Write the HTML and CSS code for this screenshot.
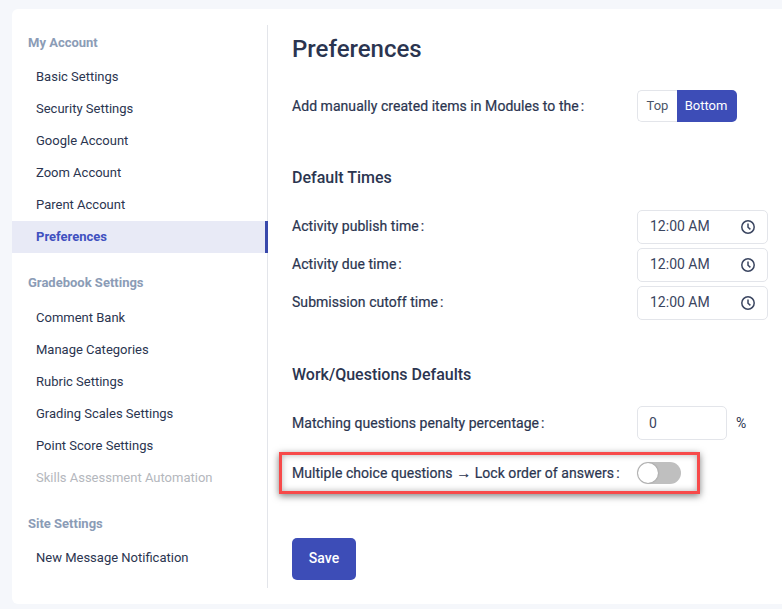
FILE: index.html
```html
<!DOCTYPE html>
<html lang="en">
<head>
<meta charset="utf-8">
<title>Preferences</title>
<link rel="stylesheet" href="styles.css">
</head>
<body>
<div class="card">
  <nav class="sidebar">
    <div class="group-title first">My Account</div>
    <a class="item">Basic Settings</a>
    <a class="item">Security Settings</a>
    <a class="item">Google Account</a>
    <a class="item">Zoom Account</a>
    <a class="item">Parent Account</a>
    <a class="item active">Preferences</a>
    <div class="group-title tall">Gradebook Settings</div>
    <a class="item">Comment Bank</a>
    <a class="item">Manage Categories</a>
    <a class="item">Rubric Settings</a>
    <a class="item">Grading Scales Settings</a>
    <a class="item">Point Score Settings</a>
    <a class="item disabled">Skills Assessment Automation</a>
    <div class="group-title">Site Settings</div>
    <a class="item">New Message Notification</a>
  </nav>
  <main class="content">
    <h1 class="title">Preferences</h1>
    <div class="row row-modules">
      <label class="label">Add manually created items in Modules to the<span class="colon">:</span></label>
      <div class="segmented">
        <span class="seg">Top</span>
        <span class="seg seg-on">Bottom</span>
      </div>
    </div>
    <h2 class="section section-times">Default Times</h2>
    <div class="time-rows">
      <div class="row">
        <label class="label">Activity publish time<span class="colon">:</span></label>
        <div class="input time"><span class="time-text">12:00 AM</span>
          <svg class="clock" viewBox="0 0 16 16"><circle cx="8" cy="8" r="6.2"/><path d="M8 4.4V8.2L10.4 10.4"/></svg></div>
      </div>
      <div class="row">
        <label class="label">Activity due time<span class="colon">:</span></label>
        <div class="input time"><span class="time-text">12:00 AM</span>
          <svg class="clock" viewBox="0 0 16 16"><circle cx="8" cy="8" r="6.2"/><path d="M8 4.4V8.2L10.4 10.4"/></svg></div>
      </div>
      <div class="row">
        <label class="label">Submission cutoff time<span class="colon">:</span></label>
        <div class="input time"><span class="time-text">12:00 AM</span>
          <svg class="clock" viewBox="0 0 16 16"><circle cx="8" cy="8" r="6.2"/><path d="M8 4.4V8.2L10.4 10.4"/></svg></div>
      </div>
    </div>
    <h2 class="section section-work">Work/Questions Defaults</h2>
    <div class="row row-penalty">
      <label class="label">Matching questions penalty percentage<span class="colon">:</span></label>
      <div class="input number"><span>0</span></div>
      <span class="unit">%</span>
    </div>
    <div class="row row-lock">
      <div class="highlight"></div>
      <label class="label">Multiple choice questions <span class="arrow">→</span> Lock order of answers<span class="colon">:</span></label>
      <span class="switch"><span class="knob"></span></span>
    </div>
    <button class="save">Save</button>
  </main>
</div>
</body>
</html>
```

FILE: styles.css
```css
* { box-sizing: border-box; }
html, body { margin: 0; height: 100%; overflow: hidden; }
body {
  background: #f5f7fb;
  padding: 9px 0 5px 12px;
  font-family: Roboto, "Liberation Sans", sans-serif;
  color: #2b3550;
  font-size: 14px;
}
.card {
  display: flex;
  align-items: flex-start;
  height: 595px;
  padding: 16px 0;
  background: #fff;
  border-radius: 6px 0 0 6px;
}
.sidebar {
  display: flex;
  flex-direction: column;
  width: 256px;
  height: 563px;
  border-right: 1px solid #e3e5ea;
  flex: none;
}
.group-title {
  height: 36px;
  line-height: 36px;
  margin-top: 12px;
  padding-left: 16px;
  font-size: 13px;
  font-weight: 700;
  color: #8b9cb6;
}
.group-title.first { margin-top: 0; }
.group-title.tall { height: 37px; }
.item {
  height: 32px;
  line-height: 32px;
  padding-left: 24px;
  font-size: 13px;
  color: #2b3550;
}
.item.active {
  margin-right: -1px;
  background: #e8eaf6;
  border-right: 3px solid #3949ab;
  color: #3f51c0;
  font-weight: 700;
}
.item.disabled { color: #b4b7bd; }
.content { flex: 1; padding-left: 24px; }
.title {
  margin: 0;
  height: 48px;
  line-height: 48px;
  font-size: 24px;
  font-weight: 500;
  color: #2b3550;
}
.section {
  margin: 0;
  height: 24px;
  line-height: 24px;
  font-size: 16px;
  font-weight: 500;
}
.section-times { margin-top: 44px; }
.section-work { margin-top: 43px; }
.row { display: flex; align-items: center; position: relative; }
.label { width: 345px; flex: none; font-weight: 400; font-size: 14px; letter-spacing: .05px; -webkit-text-stroke: .2px #2b3550; }
.colon { margin-left: 2px; }
.arrow { letter-spacing: 0; font-size: 15px; line-height: 14px; }
.row-modules { margin-top: 17px; }
.segmented {
  display: flex;
  width: 100px;
  height: 32px;
  font-size: 13px;
}
.seg {
  width: 40px;
  line-height: 29px;
  text-align: center;
  color: #4b5568;
  border: 1px solid #e3e5ea;
  border-right: 0;
  border-radius: 5px 0 0 5px;
}
.seg-on {
  flex: 1;
  padding-right: 2px;
  line-height: 31px;
  border: 0;
  border-radius: 0 5px 5px 0;
  background: #3d4db7;
  color: #fff;
}
.time-rows { display: flex; flex-direction: column; gap: 4px; margin-top: 20px; }
.time-rows .label { padding-bottom: 2px; }
.time-text { padding-bottom: 2px; color: #3a4560; }
.input {
  display: flex;
  align-items: center;
  justify-content: space-between;
  height: 34px;
  padding: 0 11px 0 12px;
  border: 1px solid #e3e5ea;
  border-radius: 5px;
  font-size: 14px;
  flex: none;
}
.time { width: 131px; }
.number { width: 90px; padding-left: 11px; color: #3a4560; }
.clock {
  width: 16px;
  height: 16px;
  fill: none;
  stroke: #3a4560;
  stroke-width: 1.5;
}
.row-penalty { margin-top: 19px; }
.unit { margin-left: 9px; font-size: 14px; }
.row-lock { margin-top: 22px; }
.highlight {
  position: absolute;
  left: -13px;
  top: -10px;
  width: 421px;
  height: 42px;
  border: 3px solid #f74a4a;
  box-shadow: 0 2px 7px rgba(0, 0, 0, .5), inset 0 0 6px rgba(0, 0, 0, .3);
  pointer-events: none;
}
.switch {
  display: block;
  position: relative;
  z-index: 1;
  width: 44px;
  height: 22px;
  border-radius: 11px;
  background: #bfbfbf;
}
.knob {
  position: absolute;
  left: 1px;
  top: 1px;
  width: 20px;
  height: 20px;
  border-radius: 50%;
  background: #fff;
  box-shadow: 0 0 2px rgba(0, 0, 0, .3);
}
.save {
  display: block;
  width: 64px;
  height: 42px;
  margin-top: 54px;
  padding: 0 0 2px;
  border: 0;
  border-radius: 5px;
  background: #3d4db7;
  color: #fff;
  font: 500 14px Roboto, "Liberation Sans", sans-serif;
}
```
